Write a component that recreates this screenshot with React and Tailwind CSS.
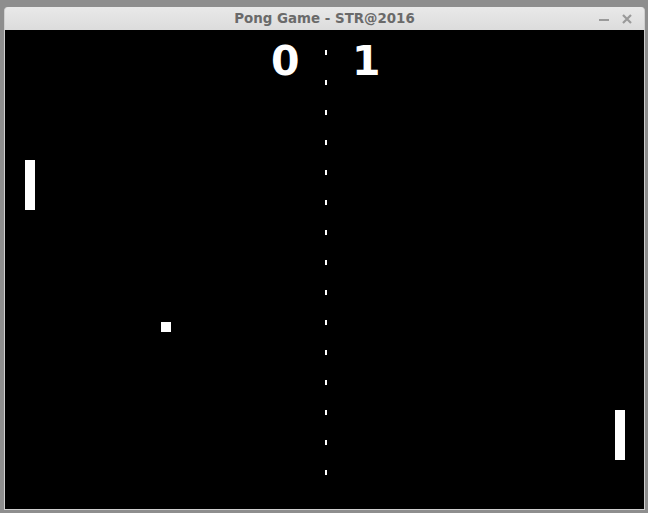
import React from "react";

const dashes = Array.from({ length: 15 }, (_, i) => i);

export default function App() {
  return (
    <div className="w-[648px] h-[513px] bg-[#8e8e8e] pt-[7px] pl-[4px] pr-[3px] pb-[3px] overflow-hidden">
      <div className="flex flex-col h-full bg-[#dadada] rounded-t-[4px] border-x border-b border-[#cfcfcf]">
        {/* title bar */}
        <div className="relative h-[23px] shrink-0 flex items-center justify-center bg-gradient-to-b from-[#e9e9e9] to-[#dcdcdc] rounded-t-[4px]">
          <span className="text-[13.4px] font-bold text-[#6a6a6a] font-['DejaVu_Sans',sans-serif] leading-none">
            Pong Game - STR@2016
          </span>
          <div className="absolute right-[12px] top-0 h-full flex items-center gap-[13px]">
            <span className="block w-[10px] h-[2px] bg-[#9a9a9a] mt-[3px]" />
            <svg width="10" height="10" viewBox="0 0 10 10">
              <path d="M1 1 L9 9 M9 1 L1 9" stroke="#9a9a9a" strokeWidth="2.2" />
            </svg>
          </div>
        </div>

        {/* game canvas */}
        <div className="relative flex-1 bg-black">
          {/* scores */}
          <span className="absolute left-[266px] top-[11px] text-[41px] leading-none font-bold text-white font-['DejaVu_Sans',sans-serif]">
            0
          </span>
          <span className="absolute left-[347px] top-[11px] text-[41px] leading-none font-bold text-white font-['DejaVu_Sans',sans-serif]">
            1
          </span>

          {/* net */}
          <div className="absolute left-[320px] top-[20px] flex flex-col gap-[25px]">
            {dashes.map((i) => (
              <div key={i} className="w-[2px] h-[5px] bg-white" />
            ))}
          </div>

          {/* paddles */}
          <div className="absolute left-[20px] top-[130px] w-[10px] h-[50px] bg-white" />
          <div className="absolute left-[610px] top-[380px] w-[10px] h-[50px] bg-white" />

          {/* ball */}
          <div className="absolute left-[156px] top-[292px] w-[10px] h-[10px] bg-white" />
        </div>
      </div>
    </div>
  );
}
